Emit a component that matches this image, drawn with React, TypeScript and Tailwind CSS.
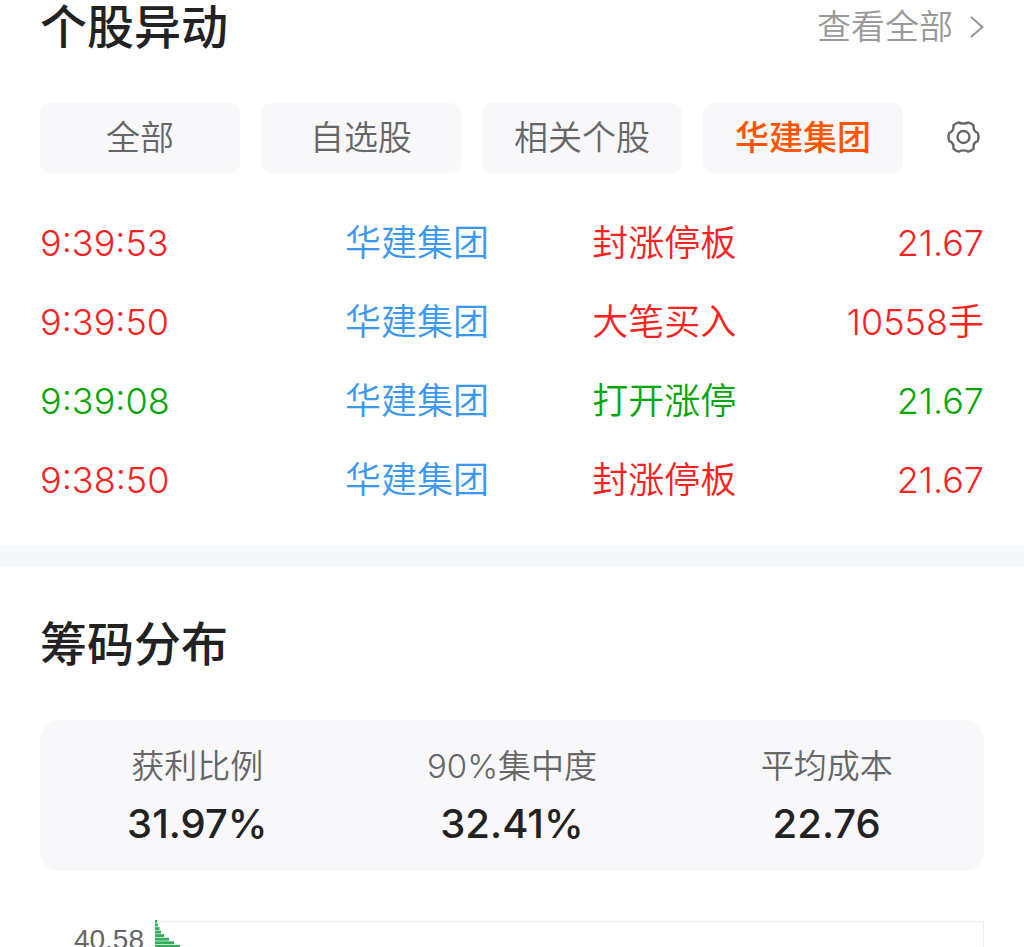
import { useState } from "react";

interface Movement {
  time: string;
  stock: string;
  event: string;
  value: string;
  up: boolean;
}

const tabs = ["全部", "自选股", "相关个股", "华建集团"];

const movements: Movement[] = [
  { time: "9:39:53", stock: "华建集团", event: "封涨停板", value: "21.67", up: true },
  { time: "9:39:50", stock: "华建集团", event: "大笔买入", value: "10558手", up: true },
  { time: "9:39:08", stock: "华建集团", event: "打开涨停", value: "21.67", up: false },
  { time: "9:38:50", stock: "华建集团", event: "封涨停板", value: "21.67", up: true },
];

const stats = [
  { label: "获利比例", value: "31.97%" },
  { label: "90%集中度", value: "32.41%" },
  { label: "平均成本", value: "22.76" },
];

// Chip volume per price level, highest price first
const chips = [2, 3, 4.5, 6, 9, 14, 19, 25, 29, 34];

function ChevronIcon() {
  return (
    <svg width="14" height="22" viewBox="0 0 14 22" fill="none" stroke="#999" strokeWidth="2.2" strokeLinecap="round" aria-hidden="true">
      <path d="M1.5 1.5 12.4 11 1.5 20.5" />
    </svg>
  );
}

function GearIcon() {
  return (
    <svg width="33" height="34" viewBox="0 0 33 34" fill="none" stroke="#666" strokeWidth="2.4" aria-hidden="true">
      <path
        strokeLinejoin="round"
        d="M12 1.4C13.4 3 19.6 3 21 1.4C23.2 1.8 25 2.8 26.6 4.4C26.2 8 27.8 10.9 30.6 11.8C31.8 14.6 31.8 17.4 30.6 20.2C27.8 21.1 26.2 24 26.6 27.6C25 29.2 23.2 30.2 21 30.6C19.6 29 13.4 29 12 30.6C9.8 30.2 8 29.2 6.4 27.6C6.8 24 5.2 21.1 2.4 20.2C1.2 17.4 1.2 14.6 2.4 11.8C5.2 10.9 6.8 8 6.4 4.4C8 2.8 9.8 1.8 12 1.4Z"
      />
      <circle cx="16.5" cy="16" r="6" />
    </svg>
  );
}

function MovementSection() {
  const [active, setActive] = useState("华建集团");

  return (
    <section className="px-10 pb-[27px]">
      <div className="flex items-center justify-between">
        <h2 className="text-[47px] leading-[54px] font-medium text-[#222]">个股异动</h2>
        <a href="#all" className="flex items-center gap-[17px] text-[34px] leading-[54px] font-[350] text-[#999]">
          查看全部
          <ChevronIcon />
        </a>
      </div>

      <div className="mt-[49px] flex items-center gap-[21px]">
        {tabs.map((tab) => (
          <button
            key={tab}
            type="button"
            onClick={() => setActive(tab)}
            className={`h-[70px] flex-1 rounded-[10px] bg-[#f8f8fb] text-[34px] leading-[48px] ${
              tab === active ? "font-medium text-[#ff5500]" : "font-[350] text-[#666]"
            }`}
          >
            {tab}
          </button>
        ))}
        <button type="button" aria-label="设置" className="flex w-[60px] justify-end pr-1">
          <GearIcon />
        </button>
      </div>

      <table className="mt-[30px] w-full table-fixed text-[36px] leading-[48px] font-[350]">
        <colgroup>
          <col className="w-[32.3%]" />
          <col className="w-[26.2%]" />
          <col />
          <col />
        </colgroup>
        <tbody>
          {movements.map((m) => (
            <tr key={m.time} className={`h-[79px] whitespace-nowrap ${m.up ? "text-[#f82222]" : "text-[#06a606]"}`}>
              <td className="p-0">{m.time}</td>
              <td className="p-0 text-[#3a98f2]">{m.stock}</td>
              <td className="p-0">{m.event}</td>
              <td className="p-0 text-right">{m.value}</td>
            </tr>
          ))}
        </tbody>
      </table>
    </section>
  );
}

function ChipChart() {
  return (
    <div className="mt-12 flex">
      <span className="w-[104px] pt-[5px] font-['Liberation_Sans',sans-serif] text-right text-[28px] leading-[32px] text-[#666]">
        40.58
      </span>
      <svg className="ml-[11px] h-[40px] min-w-0 flex-1" aria-hidden="true">
        <line x1="0" y1="2.5" x2="100%" y2="2.5" stroke="#eee" />
        <line x1="100%" y1="2" x2="100%" y2="100%" stroke="#eee" strokeWidth="2" />
        {chips.map((width, i) => (
          <rect key={i} x="0" y={1 + i * 3.55} width={width} height="2.9" fill="#35ad5c" />
        ))}
      </svg>
    </div>
  );
}

function ChipSection() {
  return (
    <section className="px-10 pt-[50px]">
      <h2 className="text-[47px] leading-[54px] font-medium text-[#222]">筹码分布</h2>
      <dl className="mt-[49px] grid grid-cols-3 rounded-[20px] bg-[#f8f8fb] pt-[22px] pb-[23px] text-center">
        {stats.map((s) => (
          <div key={s.label} className="flex flex-col gap-[10px]">
            <dt className="text-[33px] leading-[48px] font-[350] text-[#666]">{s.label}</dt>
            <dd className="text-[40px] leading-[48px] font-medium text-[#222]">{s.value}</dd>
          </div>
        ))}
      </dl>
      <ChipChart />
    </section>
  );
}

export default function App() {
  return (
    <main className="h-screen overflow-hidden bg-white font-['Inter','Noto_Sans_CJK_SC',sans-serif]">
      <MovementSection />
      <div className="h-[21px] bg-[#f4f8fa]" />
      <ChipSection />
    </main>
  );
}
